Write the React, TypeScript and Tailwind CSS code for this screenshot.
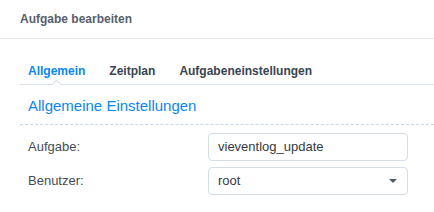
const tabs = ["Allgemein", "Zeitplan", "Aufgabeneinstellungen"];

function Caret() {
  return (
    <svg width="8" height="4" viewBox="0 0 8 4" className="shrink-0">
      <path d="M0 0h8L4 4z" fill="#505a64" />
    </svg>
  );
}

export default function App() {
  return (
    <div className="w-[434px] h-[212px] bg-white overflow-hidden font-['Liberation_Sans',Arial,sans-serif]">
      {/* Dialog header */}
      <div className="h-[39px] flex items-center px-5 border-b border-[#e3e9ef]">
        <span className="text-[12px] font-bold text-[#56606b]">Aufgabe bearbeiten</span>
      </div>

      {/* Tabs */}
      <div className="ml-5 h-[46px] flex gap-2 border-b border-[#d8e0e8]">
        {tabs.map((t, i) => (
          <div key={t} className="relative px-2 pt-[19px]">
            <span
              className={
                "text-[12px] font-bold leading-[14px] " +
                (i === 0 ? "text-[#0a86f0]" : "text-[#3a4452]")
              }
            >
              {t}
            </span>
            {i === 0 && (
              <div className="absolute left-1/2 -bottom-[4px] -ml-[4px] w-[7px] h-[7px] rotate-45 bg-white border-l border-t border-[#d8e0e8]" />
            )}
          </div>
        ))}
      </div>

      {/* Section */}
      <div className="ml-5">
        <div className="h-[40px] pt-[3px] pl-2 flex items-center border-b border-dashed border-[#c6d8ea]">
          <span className="text-[15px] text-[#0a86f0]">Allgemeine Einstellungen</span>
        </div>

        <div className="mt-2 grid grid-cols-[188px_200px] gap-y-[6px]">
          <label className="pl-2 flex items-center text-[13px] text-[#454c55]">Aufgabe:</label>
          <div className="h-[28px] flex items-center pl-[9px] border border-[#d5dee7] rounded-[4px] text-[13px] text-[#333b44]">
            vieventlog_update
          </div>

          <label className="pl-2 flex items-center text-[13px] text-[#454c55]">Benutzer:</label>
          <div className="h-[28px] flex items-center justify-between pl-[9px] pr-[10px] border border-[#d5dee7] rounded-[4px] text-[13px] text-[#333b44]">
            <span>root</span>
            <Caret />
          </div>
        </div>
      </div>
    </div>
  );
}
